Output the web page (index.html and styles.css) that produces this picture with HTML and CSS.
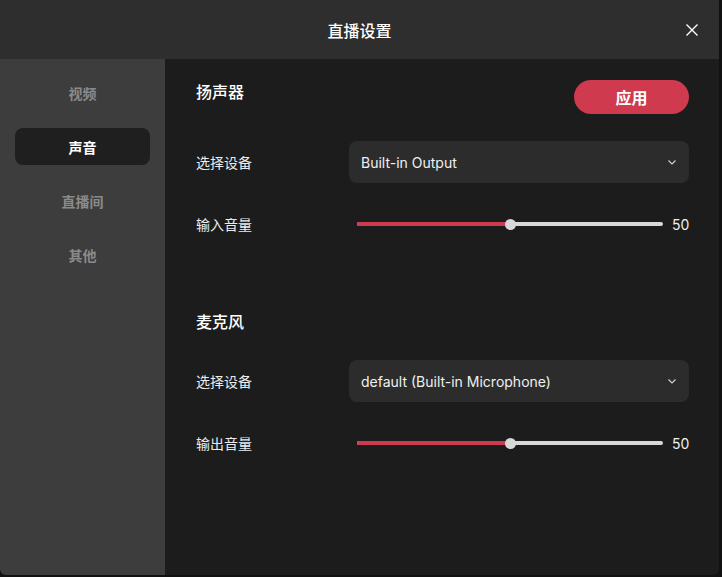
FILE: index.html
```html
<!DOCTYPE html>
<html lang="zh-CN">
<head>
  <meta charset="UTF-8">
  <meta name="viewport" content="width=device-width, initial-scale=1.0">
  <title>直播设置</title>
  <link rel="stylesheet" href="styles.css">
</head>
<body>
  <div class="window">
    <div class="titlebar">
      <span></span>
      <h1 class="title">直播设置</h1>
      <button class="close" aria-label="关闭">
        <svg width="12" height="12" viewBox="0 0 12 12"><path d="M0.5 0.5L11.5 11.5M11.5 0.5L0.5 11.5" stroke="#fff" stroke-width="1.4" fill="none"/></svg>
      </button>
    </div>
    <div class="body">
      <nav class="sidebar">
        <div class="nav-item">视频</div>
        <div class="nav-item active">声音</div>
        <div class="nav-item">直播间</div>
        <div class="nav-item">其他</div>
      </nav>
      <main class="content">
        <section class="section">
          <div class="section-head tall">
            <h2>扬声器</h2>
            <button class="apply">应用</button>
          </div>
          <div class="row">
            <label>选择设备</label>
            <div class="select">
              <span>Built-in Output</span>
              <svg width="8" height="5" viewBox="0 0 8 5"><path d="M0.5 0.5L4 4L7.5 0.5" stroke="#d0d0d0" stroke-width="1.2" fill="none"/></svg>
            </div>
          </div>
          <div class="row">
            <label>输入音量</label>
            <div class="slider">
              <div class="track">
                <div class="fill" style="width: 50%"></div>
                <div class="thumb" style="left: 50%"></div>
              </div>
              <span class="value">50</span>
            </div>
          </div>
        </section>
        <section class="section second">
          <div class="section-head">
            <h2>麦克风</h2>
          </div>
          <div class="row">
            <label>选择设备</label>
            <div class="select">
              <span>default (Built-in Microphone)</span>
              <svg width="8" height="5" viewBox="0 0 8 5"><path d="M0.5 0.5L4 4L7.5 0.5" stroke="#d0d0d0" stroke-width="1.2" fill="none"/></svg>
            </div>
          </div>
          <div class="row">
            <label>输出音量</label>
            <div class="slider">
              <div class="track">
                <div class="fill" style="width: 50%"></div>
                <div class="thumb" style="left: 50%"></div>
              </div>
              <span class="value">50</span>
            </div>
          </div>
        </section>
      </main>
    </div>
  </div>
</body>
</html>
```

FILE: styles.css
```css
body { margin: 0; background: #111; font-family: Inter, "Noto Sans CJK SC", sans-serif; color: #fff; }
.window { width: 719px; height: 575px; display: flex; flex-direction: column; background: #1c1c1c; border-radius: 0 0 6px 6px; overflow: hidden; }
.titlebar { height: 59px; flex: none; background: #2e2e2e; display: grid; grid-template-columns: 1fr auto 1fr; align-items: center; }
.title { margin: 0; font-size: 16px; font-weight: 500; font-family: "Noto Sans CJK SC", sans-serif; line-height: 22px; }
.close { justify-self: end; margin-right: 21px; width: 12px; height: 12px; padding: 0; border: none; background: none; display: flex; cursor: pointer; }
.body { flex: 1; display: flex; }
.sidebar { width: 165px; flex: none; background: #3d3d3d; padding: 15px 15px 0; box-sizing: border-box; display: flex; flex-direction: column; gap: 17px; }
.nav-item { height: 37px; display: flex; align-items: center; justify-content: center; border-radius: 8px; font-family: "Noto Sans CJK SC", sans-serif; font-size: 14px; font-weight: 700; color: #8a8a8a; }
.nav-item.active { background: #1f1f1f; color: #fff; }
.content { flex: 1; padding: 21px 30px 0 31px; }
.section { display: flex; flex-direction: column; gap: 20px; }
.section.second { margin-top: 65px; }
.section-head { display: flex; justify-content: space-between; align-items: flex-start; height: 24px; margin-bottom: 6px; }
.section-head.tall { height: 34px; margin-bottom: 7px; }
.section-head h2 { margin: -1px 0 0; font-family: "Noto Sans CJK SC", sans-serif; font-size: 16px; font-weight: 500; line-height: 24px; }
.apply { width: 115px; height: 34px; border: none; border-radius: 17px; background: #cf3a4e; color: #fff; font-family: "Noto Sans CJK SC", sans-serif; font-size: 16px; font-weight: 700; cursor: pointer; padding: 0; }
.row { display: flex; align-items: center; height: 42px; }
.row label { width: 153px; flex: none; font-family: "Noto Sans CJK SC", sans-serif; font-size: 14px; color: #ececec; }
.select { flex: 1; height: 42px; box-sizing: border-box; background: #2c2c2c; border-radius: 8px; padding: 0 13px 0 12px; display: flex; align-items: center; justify-content: space-between; font-size: 14px; color: #f0f0f0; }
.slider { flex: 1; display: flex; align-items: center; padding-left: 8px; gap: 9px; }
.track { position: relative; flex: 1; height: 4px; border-radius: 2px; background: #d8d8d8; }
.fill { height: 100%; background: #cf3a4e; border-radius: 2px 0 0 2px; }
.thumb { position: absolute; top: 50%; width: 11px; height: 11px; margin: -5.5px 0 0 -5.5px; border-radius: 50%; background: #d8d8d8; }
.value { width: 17px; font-size: 14px; color: #f0f0f0; text-align: right; }
```
